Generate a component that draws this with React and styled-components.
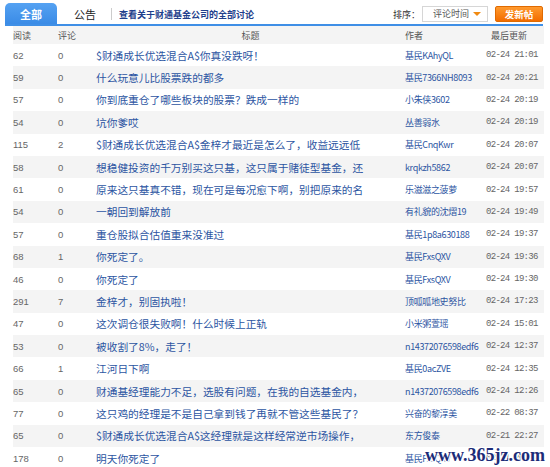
import styled, { createGlobalStyle } from "styled-components"

const GlobalStyle = createGlobalStyle`
  body {
    margin: 0;
    background: #fff;
    font-family: "Noto Sans CJK SC", "Liberation Sans", sans-serif;
  }
`

const Page = styled.div`
  position: relative;
  width: 550px;
  height: 467px;
  overflow: hidden;
  padding-top: 3px;
  box-sizing: border-box;
`

const TopBar = styled.div`
  display: flex;
  align-items: flex-end;
  height: 21px;
  margin-left: 5px;
  width: 538px;
  border-bottom: 2px solid #3f8fe6;
`

const Tab = styled.div`
  width: ${(p) => (p.$active ? "52px" : "auto")};
  height: 21px;
  line-height: 23px;
  text-align: center;
  font-size: 11px;
  font-weight: ${(p) => (p.$active ? "bold" : "normal")};
  color: ${(p) => (p.$active ? "#fff" : "#222")};
  background: ${(p) => (p.$active ? "linear-gradient(#55a2f2, #3a8be6)" : "transparent")};
  border-radius: 5px 5px 0 0;
  padding: ${(p) => (p.$active ? "0" : "0 0 0 17px")};
`

const Divider = styled.span`
  width: 1px;
  height: 12px;
  background: #ccc;
  margin: 0 7px 4px 15px;
`

const AllLink = styled.a`
  font-size: 9px;
  font-weight: bold;
  color: #1f3f8c;
  line-height: 19px;
`

const Spacer = styled.div`
  flex: 1;
`

const SortLabel = styled.span`
  font-size: 9px;
  color: #333;
  line-height: 19px;
  margin-right: 2px;
`

const Select = styled.div`
  position: relative;
  width: 66px;
  height: 16px;
  box-sizing: border-box;
  border: 1px solid #d6d6d6;
  background: #fff;
  font-size: 9px;
  color: #555;
  line-height: 14px;
  padding-left: 10px;
  margin-bottom: 2px;
`

const Caret = styled.span`
  position: absolute;
  right: 6px;
  top: 5px;
  border-left: 4px solid transparent;
  border-right: 4px solid transparent;
  border-top: 4px solid #f08a12;
`

const PostButton = styled.button`
  width: 48px;
  height: 16px;
  margin: 0 0 2px 7px;
  padding: 0;
  border: 1px solid #e06a00;
  border-radius: 2px;
  background: linear-gradient(#ff9a2e, #f26c00);
  color: #fff;
  font-family: inherit;
  font-size: 9.5px;
  font-weight: bold;
  line-height: 14px;
`

const Table = styled.div`
  margin-left: 13px;
  width: 531px;
`

const Row = styled.div`
  display: grid;
  grid-template-columns: 45px 38px 309px 81px 1fr;
  align-items: center;
  height: ${(p) => (p.$header ? "18px" : "22.4px")};
  background: ${(p) => (p.$shade ? "#f4f4f4" : "#fff")};
`

const HeadCell = styled.div`
  font-size: 9px;
  color: #555;
  text-align: ${(p) => (p.$center ? "center" : "left")};
  padding-left: ${(p) => (p.$pad ? "5px" : "0")};
`

const Num = styled.div`
  font-family: "Liberation Sans", sans-serif;
  font-size: 9.5px;
  color: #666;
`

const Title = styled.a`
  font-size: 10.7px;
  color: #2c55a2;
  white-space: nowrap;
  overflow: hidden;
`

const Author = styled.a`
  font-size: 9px;
  letter-spacing: -0.35px;
  color: #2c55a2;
  white-space: nowrap;
  overflow: hidden;
`

const Time = styled.div`
  font-family: "Liberation Mono", monospace;
  font-size: 9px;
  letter-spacing: -0.7px;
  color: #666;
`

const Watermark = styled.div`
  position: absolute;
  right: 5px;
  bottom: 1px;
  font-family: "Liberation Serif", serif;
  font-weight: bold;
  font-size: 18px;
  color: #1c2c78;
  text-shadow: 1px 1px 0 #fff, -1px -1px 0 #fff, 1px -1px 0 #fff, -1px 1px 0 #fff;
`

const posts = [
  [62, 0, "$财通成长优选混合A$你真没跌呀！", "基民KAhyQL", "02-24 21:01"],
  [59, 0, "什么玩意儿比股票跌的都多", "基民7366NH8093", "02-24 20:21"],
  [57, 0, "你到底重仓了哪些板块的股票？跌成一样的", "小朱侠3602", "02-24 20:19"],
  [54, 0, "坑你爹哎", "丛善弱水", "02-24 20:19"],
  [115, 2, "$财通成长优选混合A$金梓才最近是怎么了，收益远远低", "基民CnqKwr", "02-24 20:07"],
  [58, 0, "想稳健投资的千万别买这只基，这只属于赌徒型基金，还", "krqkzh5862", "02-24 20:07"],
  [61, 0, "原来这只基真不错，现在可是每况愈下啊，别把原来的名", "乐滋滋之菠萝", "02-24 19:57"],
  [54, 0, "一朝回到解放前", "有礼貌的沈熠19", "02-24 19:49"],
  [57, 0, "重仓股拟合估值重来没准过", "基民1p8a630188", "02-24 19:37"],
  [68, 1, "你死定了。", "基民FxsQXV", "02-24 19:36"],
  [46, 0, "你死定了", "基民FxsQXV", "02-24 19:30"],
  [291, 7, "金梓才，别固执啦！", "顶呱呱地史努比", "02-24 17:23"],
  [47, 0, "这次调仓很失败啊！什么时候上正轨", "小米粥萱瑶", "02-24 15:01"],
  [53, 0, "被收割了8%，走了！", "n14372076598edf6", "02-24 12:37"],
  [66, 1, "江河日下啊", "基民0acZVE", "02-24 12:35"],
  [65, 0, "财通基经理能力不足，选股有问题，在我的自选基金内，", "n14372076598edf6", "02-24 12:26"],
  [77, 0, "这只鸡的经理是不是自己拿到钱了再就不管这些基民了？", "兴奋的黎淳美", "02-22 08:37"],
  [65, 0, "$财通成长优选混合A$这经理就是这样经常逆市场操作，", "东方俊泰", "02-21 22:27"],
  [178, 0, "明天你死定了", "基民FxsQXV", "02-21 20:37"],
]

export default function App() {
  return (
    <Page>
      <GlobalStyle />
      <TopBar>
        <Tab $active>全部</Tab>
        <Tab>公告</Tab>
        <Divider />
        <AllLink>查看关于财通基金公司的全部讨论</AllLink>
        <Spacer />
        <SortLabel>排序：</SortLabel>
        <Select>
          评论时间
          <Caret />
        </Select>
        <PostButton>发新帖</PostButton>
      </TopBar>
      <Table>
        <Row $header $shade>
          <HeadCell>阅读</HeadCell>
          <HeadCell>评论</HeadCell>
          <HeadCell $center>标题</HeadCell>
          <HeadCell>作者</HeadCell>
          <HeadCell $pad>最后更新</HeadCell>
        </Row>
        {posts.map(([reads, comments, title, author, time], i) => (
          <Row key={i} $shade={i % 2 === 1}>
            <Num>{reads}</Num>
            <Num>{comments}</Num>
            <Title>{title}</Title>
            <Author>{author}</Author>
            <Time>{time}</Time>
          </Row>
        ))}
      </Table>
      <Watermark>www.365jz.com</Watermark>
    </Page>
  )
}
